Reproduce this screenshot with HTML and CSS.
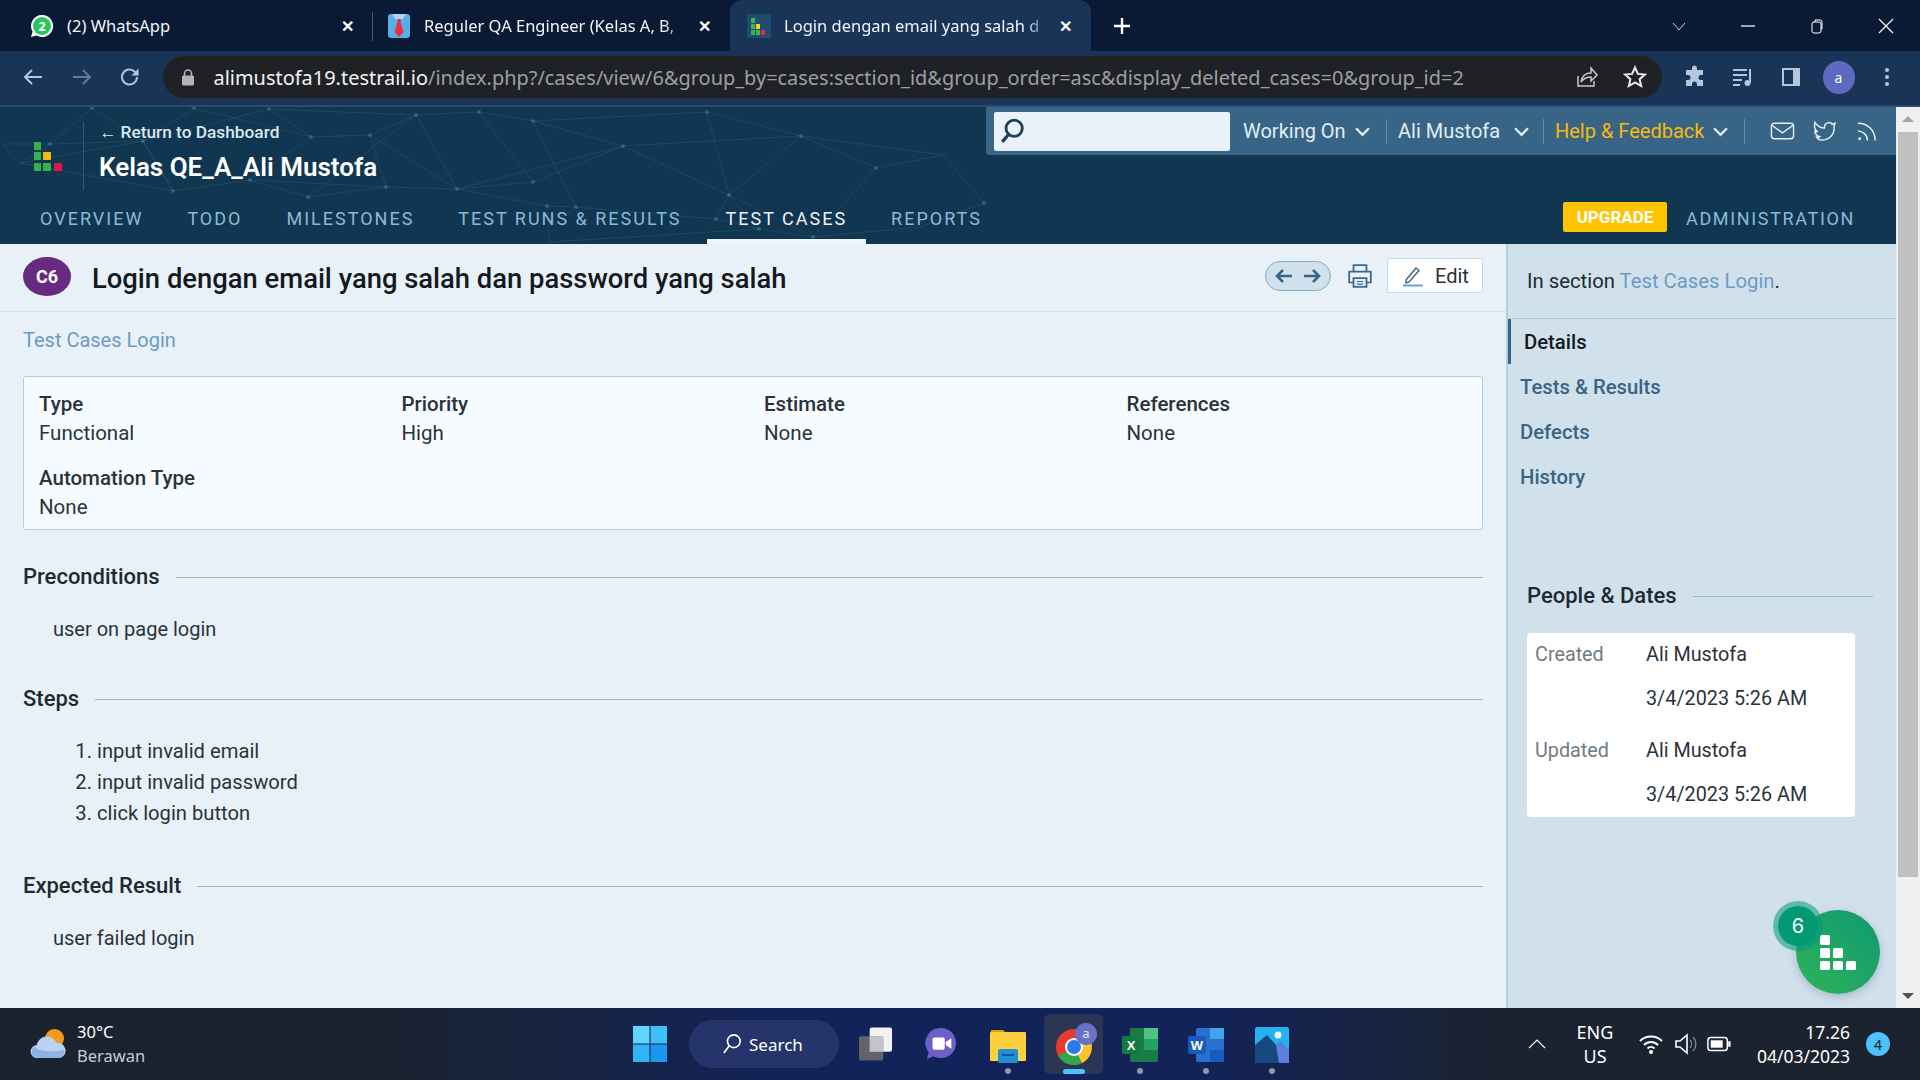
FILE: index.html
```html
<!DOCTYPE html>
<html lang="en">

<head>
	<meta charset="UTF-8">
	<meta name="viewport" content="width=device-width, initial-scale=1.0">
	<title>Login dengan email yang salah dan password yang salah</title>
	<link rel="stylesheet" href="styles.css">
</head>

<body>

	<!-- browser tabs -->
	<div class="tabstrip">
		<div class="tab tab-sep">
			<svg class="favicon" viewBox="0 0 24 24"><path d="M12 1a11 11 0 0 0-9.4 16.6L1 23l5.6-1.5A11 11 0 1 0 12 1z" fill="#fff"/><circle cx="12" cy="12" r="9" fill="#25c65a"/><text x="12" y="16.5" class="fav-num">2</text></svg>
			<span class="tab-title">(2) WhatsApp</span>
			<span class="tab-close">✕</span>
		</div>
		<div class="tab">
			<svg class="favicon" viewBox="0 0 24 24"><rect x="1" y="0" width="22" height="24" rx="3" fill="#5aaee8"/><path d="M5 0h14l-4 6H9z" fill="#a9d8f5"/><path d="M10 5h4l-0.5 3 3 10-4.500 5-4.500-5 3-10z" fill="#e5323f"/></svg>
			<span class="tab-title fade">Reguler QA Engineer (Kelas A, B,</span>
			<span class="tab-close">✕</span>
		</div>
		<div class="tab tab-active">
			<svg class="favicon" viewBox="0 0 24 24"><rect x="0" y="0" width="24" height="24" fill="#1f4d6e"/><rect x="4" y="4" width="4" height="5" fill="#3cb54a"/><rect x="4" y="10" width="4" height="5" fill="#3cb54a"/><rect x="9" y="10" width="4" height="5" fill="#f5d327"/><rect x="4" y="16" width="4" height="5" fill="#3cb54a"/><rect x="9" y="16" width="4" height="5" fill="#3cb54a"/><rect x="14" y="16" width="4" height="5" fill="#e5234f"/></svg>
			<span class="tab-title fade">Login dengan email yang salah d</span>
			<span class="tab-close">✕</span>
		</div>
		<svg class="tab-new" viewBox="0 0 18 18"><path d="M9 1v16M1 9h16" stroke="#fff" stroke-width="2.400"/></svg>
		<div class="win-controls">
			<svg viewBox="0 0 16 16"><path d="M2 5l6 7 6-7" fill="none" stroke="#c6d2e2" stroke-width="1"/></svg>
			<svg viewBox="0 0 16 16"><path d="M1 8h14" stroke="#fff" stroke-width="1.200"/></svg>
			<svg viewBox="0 0 16 16"><rect x="3" y="4" width="9" height="11" rx="2" fill="none" stroke="#fff"/><path d="M6 4V2h5a2 2 0 0 1 2 2v7h-1" fill="none" stroke="#fff"/></svg>
			<svg viewBox="0 0 16 16"><path d="M1 1l14 14M15 1L1 15" stroke="#fff" stroke-width="1.100"/></svg>
		</div>
	</div>

	<!-- browser toolbar -->
	<div class="toolbar">
		<svg class="tool-icon" viewBox="0 0 24 24"><path d="M21 12H4M11 5l-7 7 7 7" fill="none" stroke="#b4c5dc" stroke-width="2"/></svg>
		<svg class="tool-icon" viewBox="0 0 24 24"><path d="M3 12h17M13 5l7 7-7 7" fill="none" stroke="#627a9a" stroke-width="2"/></svg>
		<svg class="tool-icon" viewBox="0 0 24 24"><path d="M19 12a7.500 7.500 0 1 1-2.200-5.300L20 9.500" fill="none" stroke="#b4c5dc" stroke-width="2"/><path d="M20.500 3.500v7h-7z" fill="#b4c5dc"/></svg>
		<div class="omnibox">
			<svg class="lock" viewBox="0 0 14 18"><path d="M3.500 8V5.500a3.500 3.500 0 0 1 7 0V8" fill="none" stroke="#b0b3b8" stroke-width="1.600"/><rect x="1" y="7.500" width="12" height="10" rx="1.500" fill="#b0b3b8"/></svg>
			<span class="url"><span class="url-host">alimustofa19.testrail.io</span>/index.php?/cases/view/6&amp;group_by=cases:section_id&amp;group_order=asc&amp;display_deleted_cases=0&amp;group_id=2</span>
			<svg class="omni-icon" viewBox="0 0 24 24"><path d="M3 11v10h16v-5M6 17c1-6 5-9 10-9V3l6 7-6 6v-4c-4 0-7 1-10 5z" fill="none" stroke="#c4c7cc" stroke-width="1.500"/></svg>
			<svg class="omni-icon" viewBox="0 0 24 24"><path d="M12 2.500l2.900 6.400 7 .7-5.300 4.600 1.600 6.800-6.200-3.600-6.200 3.600 1.600-6.800L2.100 9.600l7-.7z" fill="none" stroke="#e8eaed" stroke-width="2"/></svg>
		</div>
		<svg class="ext-icon" viewBox="0 0 24 24"><path d="M9 3a2.500 2.500 0 0 1 5 0v2h6v5h-2a2.500 2.500 0 0 0 0 5h2v6h-6v-2a2.500 2.500 0 0 0-5 0v2H3v-6h2a2.500 2.500 0 0 0 0-5H3V5h6z" fill="#b4c5dc"/></svg>
		<svg class="ext-icon" viewBox="0 0 24 24"><path d="M2 5h14M2 10h14M2 15h9M2 20h7" stroke="#b4c5dc" stroke-width="2"/><path d="M19 4v14" stroke="#b4c5dc" stroke-width="2"/><circle cx="16.500" cy="18" r="3" fill="#b4c5dc"/></svg>
		<svg class="ext-icon" viewBox="0 0 24 24"><rect x="3" y="3" width="18" height="18" fill="#b4c5dc"/><rect x="5" y="5" width="9" height="14" fill="#1a3458"/></svg>
		<div class="avatar">a</div>
		<svg class="ext-icon menu-dots" viewBox="0 0 24 24"><circle cx="12" cy="5" r="2" fill="#b4c5dc"/><circle cx="12" cy="12" r="2" fill="#b4c5dc"/><circle cx="12" cy="19" r="2" fill="#b4c5dc"/></svg>
	</div>

	<div class="viewport">
		<div class="app">

			<!-- testrail header -->
			<header class="header">
				<svg class="header-net" viewBox="0 0 1000 137">
					<path d="M92 1L143 34L50 37L2 37L20 56L50 37L92 1M194 1L143 34L269 2L311 30L194 1M269 2L416 8L370 28L311 30L250 73L173 84L143 34M416 8L479 5L533 14L623 39L457 82L416 8M370 28L457 82L386 80L308 90L250 73L386 80L370 28M533 14L707 5L801 29L623 39L533 75L457 82L547 99L576 100L533 14M801 29L729 88L623 39M729 88L707 5M801 29L876 61L813 130L729 88L716 112L576 100M876 61L943 48L984 96L920 120L813 130M801 29L943 48M729 88L759 122L549 135L547 99M20 56L143 34L173 84L20 56M716 112L759 122L813 130M479 5L533 75M308 90L416 8" fill="none" stroke="#7fb2cf" stroke-opacity=".13" stroke-width="1"/>
					<g fill="#7fb2cf" fill-opacity=".28"><circle cx="92" cy="1" r="2"/><circle cx="194" cy="1" r="2"/><circle cx="269" cy="2" r="2"/><circle cx="416" cy="8" r="2"/><circle cx="479" cy="5" r="2"/><circle cx="533" cy="14" r="2"/><circle cx="707" cy="5" r="2"/><circle cx="801" cy="29" r="2"/><circle cx="623" cy="39" r="2"/><circle cx="370" cy="28" r="2"/><circle cx="311" cy="30" r="2"/><circle cx="143" cy="34" r="2"/><circle cx="50" cy="37" r="2"/><circle cx="250" cy="73" r="2"/><circle cx="173" cy="84" r="2"/><circle cx="386" cy="80" r="2"/><circle cx="308" cy="90" r="2"/><circle cx="457" cy="82" r="2"/><circle cx="533" cy="75" r="2"/><circle cx="729" cy="88" r="2"/><circle cx="876" cy="61" r="2"/><circle cx="547" cy="99" r="2"/><circle cx="576" cy="100" r="2"/><circle cx="716" cy="112" r="2"/><circle cx="759" cy="122" r="2"/><circle cx="813" cy="130" r="2"/><circle cx="984" cy="96" r="2"/></g>
				</svg>

				<div class="header-top">
					<div class="brand">
						<svg class="brand-logo" viewBox="0 0 29 30"><rect x="1" y="1" width="7" height="8" fill="#35b04a"/><rect x="1" y="11" width="7" height="8" fill="#35b04a"/><rect x="10" y="11" width="8" height="8" fill="#f6b90e"/><rect x="1" y="22" width="7" height="8" fill="#35b04a"/><rect x="10" y="22" width="8" height="8" fill="#35b04a"/><rect x="21" y="22" width="8" height="8" fill="#e0164f"/></svg>
						<div class="brand-text">
							<a class="back-link">← Return to Dashboard</a>
							<div class="project-name">Kelas QE_A_Ali Mustofa</div>
						</div>
					</div>
					<div class="topbar">
						<div class="searchbox">
							<svg viewBox="0 0 24 24"><circle cx="14" cy="9.500" r="7.500" fill="none" stroke="#1d3f59" stroke-width="2.600"/><path d="M9 15l-6 7" stroke="#1d3f59" stroke-width="3"/></svg>
						</div>
						<div class="top-item item-working">Working On<svg class="chev" viewBox="0 0 14 10"><path d="M1 2l6 6 6-6" fill="none" stroke="currentColor" stroke-width="2.200"/></svg></div>
						<div class="top-item item-user">Ali Mustofa<svg class="chev" viewBox="0 0 14 10"><path d="M1 2l6 6 6-6" fill="none" stroke="currentColor" stroke-width="2.200"/></svg></div>
						<div class="top-item item-help"><span class="help-text">Help &amp; Feedback</span><svg class="chev" viewBox="0 0 14 10"><path d="M1 2l6 6 6-6" fill="none" stroke="currentColor" stroke-width="2.200"/></svg></div>
						<div class="top-icons">
							<svg viewBox="0 0 26 24"><rect x="1.500" y="4" width="23" height="16" rx="3" fill="none" stroke="#e2edf5" stroke-width="1.500"/><path d="M2 6l11 8 11-8" fill="none" stroke="#e2edf5" stroke-width="1.500"/></svg>
							<svg viewBox="0 0 26 24"><path d="M24 4l-3 1c-2-3-8-2-8 3v1C8 9 5 6 3 3c-1 4 0 8 3 10l-3-1c0 3 2 5 5 6-1 .5-2 1-3 .5 1 2 3 3 5 3 7 0 14-5 13-15z" fill="none" stroke="#e2edf5" stroke-width="1.500"/></svg>
							<svg viewBox="0 0 26 24"><circle cx="6" cy="20" r="1.500" fill="#e2edf5"/><path d="M4 12c5 0 10 4 10 10M4 4c11 0 18 8 18 18" fill="none" stroke="#e2edf5" stroke-width="1.500"/></svg>
						</div>
					</div>
				</div>

				<nav class="nav">
					<a class="nav-item">OVERVIEW</a>
					<a class="nav-item">TODO</a>
					<a class="nav-item">MILESTONES</a>
					<a class="nav-item">TEST RUNS &amp; RESULTS</a>
					<a class="nav-item active">TEST CASES</a>
					<a class="nav-item">REPORTS</a>
					<span class="upgrade">UPGRADE</span>
					<a class="nav-item admin">ADMINISTRATION</a>
				</nav>
			</header>

			<div class="content">

				<!-- test case -->
				<main class="main">
					<div class="case-head">
						<span class="case-id">C6</span>
						<h1 class="case-title">Login dengan email yang salah dan password yang salah</h1>
						<div class="case-actions">
							<div class="pager">
								<svg viewBox="0 0 20 18"><path d="M18 9H3M9 3L3 9l6 6" fill="none" stroke="#386585" stroke-width="2.600"/></svg>
								<svg viewBox="0 0 20 18"><path d="M2 9h15M11 3l6 6-6 6" fill="none" stroke="#386585" stroke-width="2.600"/></svg>
							</div>
							<svg class="print" viewBox="0 0 24 24"><path d="M6 8V2h12v6M6 18H2V8h20v10h-4" fill="none" stroke="#386585" stroke-width="1.600" stroke-linejoin="round"/><rect x="6" y="14" width="12" height="8" fill="none" stroke="#386585" stroke-width="1.600"/><path d="M9 17h6M9 19.500h6" stroke="#386585"/></svg>
							<div class="edit-btn">
								<svg viewBox="0 0 22 22"><path d="M4 15L14 3l3 2.500L7 17l-3 1z" fill="none" stroke="#386585" stroke-width="1.400"/><path d="M1 20.500h20" stroke="#6f9fc4" stroke-width="2"/></svg>
								Edit
							</div>
						</div>
					</div>

					<div class="case-body">
						<a class="crumb">Test Cases Login</a>

						<div class="meta-card">
							<div class="meta-field"><strong>Type</strong><span>Functional</span></div>
							<div class="meta-field"><strong>Priority</strong><span>High</span></div>
							<div class="meta-field"><strong>Estimate</strong><span>None</span></div>
							<div class="meta-field"><strong>References</strong><span>None</span></div>
							<div class="meta-field"><strong>Automation Type</strong><span>None</span></div>
						</div>

						<section class="block">
							<h2 class="block-head">Preconditions</h2>
							<p class="block-text">user on page login</p>
						</section>

						<section class="block">
							<h2 class="block-head">Steps</h2>
							<ol class="steps">
								<li>input invalid email</li>
								<li>input invalid password</li>
								<li>click login button</li>
							</ol>
						</section>

						<section class="block">
							<h2 class="block-head">Expected Result</h2>
							<p class="block-text">user failed login</p>
						</section>
					</div>
				</main>

				<!-- sidebar -->
				<aside class="sidebar">
					<div class="side-section">In section <a>Test Cases Login</a>.</div>
					<a class="side-link active">Details</a>
					<a class="side-link">Tests &amp; Results</a>
					<a class="side-link">Defects</a>
					<a class="side-link">History</a>

					<h2 class="block-head side-head">People &amp; Dates</h2>
					<div class="dates">
						<div class="dates-group">
							<span class="dates-label">Created</span><span>Ali Mustofa</span>
							<span></span><span>3/4/2023 5:26 AM</span>
						</div>
						<div class="dates-group">
							<span class="dates-label">Updated</span><span>Ali Mustofa</span>
							<span></span><span>3/4/2023 5:26 AM</span>
						</div>
					</div>
				</aside>
			</div>

			<!-- floating help button -->
			<div class="fab">
				<svg viewBox="0 0 38 36"><rect x="1" y="1" width="10" height="10" rx="1.500" fill="#fff"/><rect x="1" y="14" width="10" height="10" rx="1.500" fill="#fff"/><rect x="14" y="14" width="10" height="10" rx="1.500" fill="#fff"/><rect x="1" y="27" width="10" height="9" rx="1.500" fill="#fff"/><rect x="14" y="27" width="10" height="9" rx="1.500" fill="#fff"/><rect x="27" y="27" width="10" height="9" rx="1.500" fill="#fff"/></svg>
				<span class="fab-badge">6</span>
			</div>
		</div>

		<div class="scrollbar">
			<span class="arrow-up"></span>
			<div class="thumb"></div>
			<span class="arrow-down"></span>
		</div>
	</div>

	<!-- windows taskbar -->
	<footer class="taskbar">
		<div class="weather">
			<svg viewBox="0 0 38 34"><circle cx="26" cy="11" r="10" fill="#f59b1c"/><path d="M8 32a7 7 0 0 1-1-14 11 11 0 0 1 21-2 8 8 0 0 1 3 16z" fill="#b9d2f2"/><path d="M8 32a7 7 0 0 1-4-12c6 5 20 6 32 3a8 8 0 0 1-5 9z" fill="#8db2e4"/></svg>
			<div class="weather-text"><span>30°C</span><span class="weather-sub">Berawan</span></div>
		</div>
		<div class="dock">
			<svg class="dock-win" viewBox="0 0 34 36"><rect width="16.500" height="17.500" fill="#5fd6fb"/><rect x="17.500" width="16.500" height="17.500" fill="#3cc0f8"/><rect y="18.500" width="16.500" height="17.500" fill="#32b4f6"/><rect x="17.500" y="18.500" width="16.500" height="17.500" fill="#1a96f0"/></svg>
			<div class="dock-search">
				<svg viewBox="0 0 22 24"><circle cx="13" cy="9" r="7" fill="none" stroke="#fff" stroke-width="1.800"/><path d="M8 14l-6 8" stroke="#fff" stroke-width="1.800"/></svg>
				Search
			</div>
			<svg class="dock-app app-task" viewBox="0 0 36 36"><rect x="12" y="1" width="23" height="25" rx="2" fill="#f2f2f2"/><rect x="1" y="10" width="25" height="25" rx="2" fill="#6b6b6b" fill-opacity=".9"/><rect x="12" y="10" width="14" height="16" fill="#c4c4c4"/></svg>
			<svg class="dock-app app-teams" viewBox="0 0 34 36"><path d="M17 1c9 0 16 7 16 16s-7 16-16 16c-3 0-6-1-8-2l-7 3 2-7A16 16 0 0 1 17 1z" fill="#6c5fc7"/><rect x="8" y="11" width="13" height="13" rx="2" fill="#fff"/><path d="M22 16l6-4v11l-6-4z" fill="#fff"/></svg>
			<div class="dock-slot slot-explorer">
				<svg viewBox="0 0 36 36"><path d="M1 3h12l3 3h-15z" fill="#e0a100"/><rect x="0" y="5" width="36" height="29" rx="1" fill="#ffcf3f"/><rect x="8" y="22" width="20" height="14" rx="2" fill="#1f8fd8"/><rect x="12" y="27" width="12" height="2" fill="#0a5a9c"/></svg>
				<i class="dot"></i>
			</div>
			<div class="dock-slot slot-chrome">
				<svg viewBox="0 0 44 44"><circle cx="20" cy="24" r="18" fill="#e53c2e"/><path d="M20 24L4.400 33A18 18 0 0 0 28 40z" fill="#2ea84d"/><path d="M36 16a18 18 0 0 1-8 24L20 24z" fill="#fbc52f"/><circle cx="20" cy="24" r="9" fill="#fff"/><circle cx="20" cy="24" r="7" fill="#2a7de8"/><circle cx="32" cy="11" r="11" fill="#6a72c8"/><text x="32" y="15" class="chrome-letter">a</text></svg>
				<i class="dot dot-on"></i>
			</div>
			<div class="dock-slot slot-excel">
				<svg viewBox="0 0 36 36"><rect x="8" y="1" width="28" height="34" rx="2" fill="#1d7a45"/><rect x="22" y="1" width="14" height="11" fill="#4fc283"/><rect x="22" y="12" width="14" height="11" fill="#21a366"/><rect x="0" y="9" width="18" height="18" rx="2" fill="#107c41"/><text x="9" y="23" class="dock-letter">X</text></svg>
				<i class="dot"></i>
			</div>
			<div class="dock-slot slot-word">
				<svg viewBox="0 0 36 36"><rect x="8" y="1" width="28" height="34" rx="2" fill="#2b6fd0"/><rect x="22" y="1" width="14" height="11" fill="#41a5ee"/><rect x="22" y="23" width="14" height="12" fill="#185abd"/><rect x="0" y="9" width="18" height="18" rx="2" fill="#185abd"/><text x="9" y="23" class="dock-letter">W</text></svg>
				<i class="dot"></i>
			</div>
			<div class="dock-slot slot-photos">
				<svg viewBox="0 0 34 36"><rect width="34" height="36" rx="2" fill="#25b2ee"/><circle cx="23" cy="8" r="3.500" fill="#e6f6ff"/><path d="M0 36V18L12 8l9 10 5-3 8 9v12z" fill="#17497f"/><path d="M21 18l5-3 8 9v12H24z" fill="#5f7fdc"/></svg>
				<i class="dot"></i>
			</div>
		</div>
		<div class="tray">
			<svg class="tray-caret" viewBox="0 0 18 10"><path d="M1 9l8-8 8 8" fill="none" stroke="#fff" stroke-width="1.100"/></svg>
			<div class="tray-lang"><span>ENG</span><span>US</span></div>
			<svg class="tray-icon" viewBox="0 0 24 24"><path d="M1 9c6-6 16-6 22 0M5 13c4-4 10-4 14 0M8.500 16.500c2-2 5-2 7 0" fill="none" stroke="#fff" stroke-width="2"/><circle cx="12" cy="20" r="2" fill="#fff"/></svg>
			<svg class="tray-icon" viewBox="0 0 24 24"><path d="M3 9h4l7-6v18l-7-6H3z" fill="none" stroke="#fff" stroke-width="1.600"/><path d="M17 8a6 6 0 0 1 0 8M20 5a10 10 0 0 1 0 14" fill="none" stroke="#8a8f98" stroke-width="1.200"/></svg>
			<svg class="tray-icon" viewBox="0 0 26 24"><rect x="1" y="5" width="21" height="14" rx="3" fill="none" stroke="#fff" stroke-width="1.600"/><rect x="4" y="8" width="13" height="8" fill="#fff"/><rect x="23" y="9" width="2.500" height="6" fill="#fff"/></svg>
			<div class="tray-clock"><span>17.26</span><span>04/03/2023</span></div>
			<span class="tray-badge">4</span>
		</div>
	</footer>

</body>

</html>
```

FILE: styles.css
```css
* {
	box-sizing: border-box;
}

html,
body {
	height: 100%;
}

body {
	display: flex;
	flex-direction: column;
	width: 1920px;
	height: 1080px;
	margin: 0;
	overflow: hidden;
	background-color: #e9f1f8;
	font-family: 'Roboto', 'Liberation Sans', sans-serif;
	color: #1e2a33;
}

h1,
h2,
p,
ol {
	margin: 0;
	padding: 0;
}

/* browser chrome */
.tabstrip {
	display: flex;
	align-items: center;
	height: 51px;
	padding-left: 16px;
	background-color: #0a1a35;
	font-family: 'Noto Sans', 'Liberation Sans', sans-serif;
	color: #fff;
}

.tab {
	display: flex;
	align-items: center;
	width: 357px;
	height: 100%;
	padding: 0 16px 0 14px;
	position: relative;
}

.tab-sep::after {
	content: "";
	position: absolute;
	right: 0;
	top: 12px;
	bottom: 10px;
	width: 1px;
	background-color: #4a5a72;
}

.tab-active {
	width: 361px;
	padding-left: 17px;
	background-color: #1a3458;
	border-radius: 12px 12px 0 0;
}

.favicon {
	flex: none;
	width: 24px;
	height: 24px;
}

.fav-num {
	font: bold 13px 'Noto Sans', sans-serif;
	fill: #fff;
	text-anchor: middle;
}

.tab-title {
	flex: 1;
	margin-left: 13px;
	overflow: hidden;
	white-space: nowrap;
	font-size: 16.500px;
	color: #f2f5fa;
}

.fade {
	-webkit-mask-image: linear-gradient(to right, #000 90%, transparent 100%);
	mask-image: linear-gradient(to right, #000 90%, transparent 100%);
}

.tab-close {
	width: 20px;
	margin-left: 4px;
	font-size: 16px;
	font-weight: bold;
	text-align: center;
}

.tab-new {
	width: 18px;
	height: 18px;
	margin-left: 22px;
}

.win-controls {
	display: flex;
	gap: 53px;
	margin-left: auto;
	padding-right: 26px;
}

.win-controls svg {
	width: 16px;
	height: 16px;
}

.toolbar {
	display: flex;
	align-items: center;
	height: 56px;
	padding: 0 0 2px 21px;
	background-color: #1a3458;
	border-bottom: 2px solid #2a4a6e;
}

.tool-icon {
	width: 24px;
	height: 24px;
	margin-right: 24.500px;
}

.omnibox {
	display: flex;
	align-items: center;
	width: 1499px;
	height: 42px;
	margin-left: -4px;
	padding: 0 15px 0 18px;
	border-radius: 21px;
	background-color: #202124;
	font-family: 'Noto Sans', 'Liberation Sans', sans-serif;
}

.lock {
	width: 14px;
	height: 18px;
}

.url {
	flex: 1;
	margin-left: 19px;
	overflow: hidden;
	white-space: nowrap;
	font-size: 19.950px;
	color: #9aa0a6;
}

.url-host {
	color: #f1f3f4;
}

.omni-icon {
	width: 24px;
	height: 24px;
	margin-left: 24px;
}

.ext-icon {
	width: 24px;
	height: 24px;
	margin-left: 24px;
}

.omnibox + .ext-icon {
	margin-left: 21px;
}

.avatar {
	display: flex;
	align-items: center;
	justify-content: center;
	width: 32px;
	height: 33px;
	margin-left: 20px;
	border-radius: 50%;
	background-color: #5c6bc0;
	font-family: 'Noto Sans', sans-serif;
	font-size: 14px;
	color: #fff;
}

.menu-dots {
	margin-left: 20px;
}

/* page below the browser */
.viewport {
	display: flex;
	flex: 1;
	min-height: 0;
}

.app {
	display: flex;
	flex: 1;
	flex-direction: column;
	position: relative;
	min-width: 0;
}

.scrollbar {
	display: flex;
	flex: none;
	flex-direction: column;
	align-items: center;
	width: 24px;
	padding: 0 2px;
	background-color: #f0f0f0;
}

.arrow-up,
.arrow-down {
	width: 0;
	height: 0;
	border-left: 6px solid transparent;
	border-right: 6px solid transparent;
}

.arrow-up {
	margin-top: 9px;
	border-bottom: 6px solid #a6a6a6;
}

.thumb {
	width: 100%;
	height: 745px;
	margin-top: 10px;
	background-color: #c0c0c0;
}

.arrow-down {
	margin-top: 116px;
	border-top: 6px solid #505050;
}

/* testrail header */
.header {
	display: flex;
	flex: none;
	flex-direction: column;
	height: 137px;
	position: relative;
	background-color: #103652;
	color: #fff;
}

.header-net {
	position: absolute;
	left: 0;
	top: 0;
	width: 1000px;
	height: 137px;
}

.header-top {
	display: flex;
	height: 95px;
	position: relative;
}

.brand {
	display: flex;
	flex: 1;
	align-items: flex-start;
}

.brand-logo {
	width: 29px;
	height: 30px;
	margin: 34px 0 0 33px;
}

.brand-text {
	height: 68px;
	margin: 15px 0 0 21px;
	padding-left: 15px;
	border-left: 1px solid #2b5a78;
}

.back-link {
	display: block;
	line-height: 20px;
	font-size: 17.300px;
	font-weight: 500;
	color: #dbe7f0;
}

.project-name {
	margin-top: 10px;
	line-height: 30px;
	font-size: 26px;
	font-weight: 600;
	color: #fff;
}

.topbar {
	display: flex;
	flex: none;
	align-items: center;
	width: 910px;
	height: 48px;
	padding-left: 8px;
	background-color: #386585;
	border-bottom-left-radius: 3px;
	color: #e2edf5;
}

.searchbox {
	display: flex;
	align-items: center;
	width: 236px;
	height: 39px;
	padding-left: 5px;
	border-radius: 2px;
	background-color: #eaf1f8;
}

.searchbox svg {
	width: 26px;
	height: 26px;
}

.top-item {
	display: flex;
	align-items: center;
	height: 25px;
	padding: 0 0 0 13px;
	border-right: 1px solid #5e8eb0;
	font-size: 20px;
	white-space: nowrap;
}

.item-working {
	width: 157px;
}

.item-user {
	width: 157px;
	padding-left: 11px;
}

.item-user .chev {
	margin-left: 14px;
}

.item-help {
	width: 201px;
	padding-left: 11px;
	color: #e2edf5;
}

.help-text {
	color: #f7b90f;
}

.chev {
	flex: none;
	width: 15px;
	height: 11px;
	margin-left: 9px;
}

.top-icons {
	display: flex;
	gap: 17px;
	padding-left: 25px;
}

.top-icons svg {
	width: 25px;
	height: 24px;
}

.nav {
	display: flex;
	flex: 1;
	align-items: stretch;
	gap: 6px;
	padding: 0 41px 0 21px;
	position: relative;
}

.nav-item {
	display: flex;
	align-items: center;
	padding: 0 19px 5px;
	border-bottom: 5px solid transparent;
	font-size: 18px;
	letter-spacing: 2px;
	color: #8eb9d6;
}

.nav-item.active {
	border-bottom-color: #f2f6fa;
	color: #eef4f8;
}

.upgrade {
	display: flex;
	align-items: center;
	justify-content: center;
	align-self: flex-start;
	width: 104px;
	height: 30px;
	margin-left: auto;
	border-radius: 2px;
	background-color: #ffc400;
	font-size: 17px;
	font-weight: 700;
	color: #fff;
}

.admin {
	margin-left: 13px;
	padding: 0 0 5px;
	letter-spacing: 1.650px;
}

/* main column */
.content {
	display: flex;
	flex: 1;
	min-height: 0;
}

.main {
	flex: 1;
	min-width: 0;
	background-color: #e9f1f8;
}

.case-head {
	display: flex;
	align-items: center;
	height: 68px;
	padding: 0 23px;
	border-bottom: 1px solid #d2e1ec;
}

.case-id {
	display: flex;
	align-items: center;
	justify-content: center;
	width: 48px;
	height: 39px;
	margin-bottom: 2px;
	border-radius: 50%;
	background-color: #662a80;
	font-size: 18px;
	font-weight: 700;
	color: #fff;
}

.case-title {
	flex: 1;
	margin-left: 21px;
	margin-top: 2px;
	font-size: 27.400px;
	font-weight: 500;
	color: #14191e;
	white-space: nowrap;
}

.case-actions {
	display: flex;
	align-items: center;
	margin-bottom: 4px;
}

.pager {
	display: flex;
	align-items: center;
	justify-content: center;
	gap: 8px;
	width: 66px;
	height: 30px;
	border: 1.500px solid #7eabc9;
	border-radius: 15px;
	background-color: #d1e1ec;
}

.pager svg {
	width: 20px;
	height: 18px;
}

.print {
	width: 26px;
	height: 26px;
	margin-left: 16px;
}

.edit-btn {
	display: flex;
	align-items: center;
	gap: 11px;
	width: 96px;
	height: 35px;
	margin-left: 14px;
	padding-left: 14px;
	border: 1px solid #c7dae8;
	border-radius: 2px;
	background-color: #fff;
	font-size: 20px;
	color: #2a333a;
}

.edit-btn svg {
	width: 22px;
	height: 22px;
}

.case-body {
	padding: 16px 23px 0 23px;
}

.crumb {
	display: block;
	line-height: 24px;
	font-size: 20px;
	color: #6b9ac4;
}

.meta-card {
	display: grid;
	grid-template-columns: repeat(4, 362.500px);
	row-gap: 9px;
	height: 154px;
	margin-top: 24px;
	padding: 13px 15px 0;
	border: 1px solid #aecde3;
	border-radius: 3px;
	background-color: #f6fbff;
}

.meta-field {
	display: flex;
	flex-direction: column;
	line-height: 29px;
	font-size: 20.500px;
	color: #2a333a;
}

.meta-field strong {
	font-weight: 500;
}

.block {
	margin-top: 40px;
}

.meta-card + .block {
	margin-top: 32px;
}

.block-head {
	display: flex;
	align-items: center;
	gap: 16px;
	line-height: 30px;
	font-size: 22px;
	font-weight: 500;
	color: #1e2a33;
	white-space: nowrap;
}

.block-head::after {
	content: "";
	flex: 1;
	height: 1px;
	background-color: #9db8c9;
}

.block-text {
	margin-top: 22px;
	padding-left: 30px;
	line-height: 30px;
	font-size: 20px;
	color: #2a333a;
}

.steps {
	margin-top: 22px;
	padding: 0 0 2px 74px;
	line-height: 31px;
	font-size: 20.200px;
	color: #2a333a;
}

/* sidebar */
.sidebar {
	flex: none;
	width: 390px;
	border-left: 2px solid #b3cee2;
	background-color: #d1e1ec;
}

.side-section {
	height: 75px;
	padding: 22px 0 0 19px;
	border-bottom: 1px solid #aecbe0;
	line-height: 30px;
	font-size: 20.300px;
	color: #1e2a33;
}

.side-section a {
	color: #6b9ac4;
}

.side-link {
	display: flex;
	align-items: center;
	height: 45px;
	padding-left: 12px;
	font-size: 20.300px;
	font-weight: 500;
	color: #386585;
}

.side-link.active {
	padding-left: 13px;
	border-left: 3px solid #386585;
	color: #14191e;
}

.side-head {
	margin: 82px 23px 0 19px;
}

.dates {
	width: 328px;
	height: 184px;
	margin: 22px 0 0 19px;
	padding: 1px 8px;
	border-radius: 4px;
	background-color: #fff;
}

.dates-group {
	display: grid;
	grid-template-columns: 111px 1fr;
	grid-auto-rows: 40px;
	row-gap: 4px;
	align-items: center;
	font-size: 19.800px;
	color: #2a333a;
}

.dates-group + .dates-group {
	margin-top: 12px;
}

.dates-label {
	color: #6f7b84;
}

/* floating button */
.fab {
	display: flex;
	align-items: center;
	justify-content: center;
	width: 84px;
	height: 84px;
	position: absolute;
	left: 1796px;
	top: 803px;
	border-radius: 50%;
	background: linear-gradient(45deg, #30b25a, #0e9a70);
	box-shadow: 0 3px 10px rgba(40, 70, 90, 0.25);
}

.fab svg {
	width: 38px;
	height: 36px;
	margin-top: -1px;
}

.fab-badge {
	display: flex;
	align-items: center;
	justify-content: center;
	width: 40px;
	height: 40px;
	position: absolute;
	left: -18px;
	top: -4px;
	border-radius: 50%;
	background-color: #029a75;
	box-shadow: 0 0 0 5px rgba(2, 154, 117, 0.55);
	font-family: 'Inter', sans-serif;
	font-size: 20px;
	color: #fff;
}

/* windows taskbar */
.taskbar {
	display: flex;
	flex: none;
	align-items: center;
	height: 72px;
	background: linear-gradient(to right, #1b2330 0, #1b2330 20%, #12235a 42%, #12235a 62%, #1b2330 78%, #1b2330 100%);
	font-family: 'Noto Sans', 'Liberation Sans', sans-serif;
	color: #fff;
}

.weather {
	display: flex;
	flex: none;
	align-items: center;
	width: 633px;
	padding-left: 30px;
}

.weather svg {
	width: 36px;
	height: 32px;
}

.weather-text {
	display: flex;
	flex-direction: column;
	margin-left: 11px;
	line-height: 24px;
	font-size: 16.500px;
}

.weather-sub {
	color: #c8ccd2;
}

.dock {
	display: flex;
	flex: none;
	align-items: center;
}

.dock-win {
	width: 34px;
	height: 36px;
}

.dock-search {
	display: flex;
	align-items: center;
	gap: 7px;
	width: 150px;
	height: 48px;
	margin-left: 22px;
	padding-left: 33px;
	border-radius: 24px;
	background-color: #25346b;
	font-size: 17px;
}

.dock-search svg {
	width: 20px;
	height: 22px;
}

.dock-app {
	width: 35px;
	height: 36px;
}

.app-task {
	margin-left: 19px;
}

.app-teams {
	width: 32px;
	margin-left: 32px;
}

.dock-slot {
	display: flex;
	flex-direction: column;
	align-items: center;
	justify-content: flex-end;
	height: 60px;
	position: relative;
}

.dock-slot svg {
	width: 36px;
	height: 36px;
	margin-bottom: 11px;
}

.dot {
	width: 6px;
	height: 6px;
	position: absolute;
	bottom: 0;
	border-radius: 50%;
	background-color: #9097a6;
}

.dot-on {
	width: 22px;
	height: 5px;
	border-radius: 3px;
	background-color: #4cc2ff;
}

.slot-explorer {
	width: 36px;
	margin-left: 33px;
}

.slot-chrome {
	width: 59px;
	margin-left: 18px;
	border-radius: 6px;
	background-color: #2a3654;
}

.slot-chrome svg {
	width: 44px;
	height: 44px;
	margin: 0 0 7px 4px;
}

.chrome-letter {
	font: 13px 'Noto Sans', sans-serif;
	fill: #dfe3f6;
	text-anchor: middle;
}

.slot-excel {
	width: 36px;
	margin-left: 19px;
}

.slot-word {
	width: 36px;
	margin-left: 30px;
}

.slot-photos {
	width: 34px;
	margin-left: 31px;
}

.dock-letter {
	font: bold 13px 'Liberation Sans', sans-serif;
	fill: #fff;
	text-anchor: middle;
}

.tray {
	display: flex;
	flex: 1;
	align-items: center;
	padding-right: 30px;
}

.tray-caret {
	width: 18px;
	height: 10px;
	margin-left: 239px;
}

.tray-lang {
	display: flex;
	flex-direction: column;
	align-items: center;
	width: 40px;
	margin-left: 29px;
	line-height: 24px;
	font-size: 18px;
}

.tray-icon {
	width: 24px;
	height: 24px;
	margin-left: 10px;
}

.tray-lang + .tray-icon {
	margin-left: 24px;
}

.tray-clock {
	display: flex;
	flex-direction: column;
	align-items: flex-end;
	margin-left: auto;
	line-height: 24px;
	font-size: 17.500px;
}

.tray-badge {
	display: flex;
	align-items: center;
	justify-content: center;
	width: 24px;
	height: 24px;
	margin-left: 16px;
	border-radius: 50%;
	background-color: #4cc2ff;
	font-size: 14px;
	color: #10202c;
}
```
